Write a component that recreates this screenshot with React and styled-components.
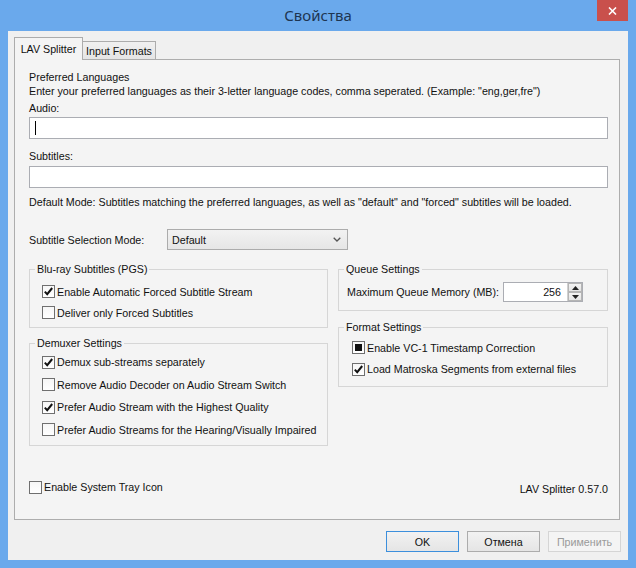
import styled, { createGlobalStyle } from "styled-components";

const FONT = `"Liberation Sans", Tahoma, Arial, sans-serif`;

const GlobalStyle = createGlobalStyle`
  html, body {
    margin: 0;
    padding: 0;
    background: #6aa9ec;
  }
  * {
    box-sizing: border-box;
  }
`;

const Window = styled.div`
  width: 636px;
  height: 568px;
  background: #6aa9ec;
  display: flex;
  flex-direction: column;
  font-family: ${FONT};
  font-size: 10.7px;
  color: #111;
`;

const TitleBar = styled.div`
  height: 31px;
  display: grid;
  grid-template-columns: 1fr auto 1fr;
  align-items: start;
`;

const Title = styled.div`
  grid-column: 2;
  padding-top: 5px;
  font-family: "Noto Sans", "Open Sans", sans-serif;
  font-size: 15px;
  line-height: 20px;
  color: #1d3551;
`;

const CloseButton = styled.div`
  grid-column: 3;
  justify-self: end;
  margin-right: 8px;
  width: 31px;
  height: 21px;
  background: #c9504c;
  display: flex;
  align-items: center;
  justify-content: center;
`;

const Client = styled.div`
  flex: 1;
  margin: 0 8px 8px;
  background: #f0f0f0;
  padding: 6px 8px 0 6px;
  display: flex;
  flex-direction: column;
`;

const TabStrip = styled.div`
  display: flex;
  align-items: flex-end;
  height: 22px;
`;

const Tab = styled.div`
  position: relative;
  height: ${(p) => (p.$active ? "23px" : "18px")};
  width: ${(p) => p.$w}px;
  margin-bottom: ${(p) => (p.$active ? "-1px" : "0")};
  margin-left: ${(p) => (p.$active ? "0" : "-1px")};
  z-index: ${(p) => (p.$active ? 1 : 0)};
  border: 1px solid #acacac;
  border-bottom: none;
  background: ${(p) =>
    p.$active ? "#f4f4f4" : "linear-gradient(#f0f0f0, #e5e5e5)"};
  display: flex;
  align-items: center;
  justify-content: center;
  line-height: 14px;
  padding-top: ${(p) => (p.$active ? "0" : "1px")};
`;

const TabPanel = styled.div`
  width: 606px;
  height: 461px;
  border: 1px solid #adadad;
  background: #f4f4f4;
  padding: 10px 11px 25px 14px;
  display: flex;
  flex-direction: column;
`;

const Line = styled.div`
  line-height: 14px;
  height: 14px;
  margin-top: ${(p) => p.$mt || 0}px;
  white-space: nowrap;
`;

const TextBox = styled.div`
  margin-top: ${(p) => p.$mt || 0}px;
  height: 22px;
  border: 1px solid #abadb3;
  background: #fff;
  display: flex;
  align-items: center;
  padding-left: 5px;
`;

const Caret = styled.span`
  width: 1px;
  height: 14px;
  background: #000;
`;

const SelectRow = styled.div`
  margin-top: 20px;
  display: flex;
  align-items: center;
  height: 21px;
`;

const SelectLabel = styled.span`
  width: 138px;
  line-height: 14px;
`;

const Select = styled.div`
  width: 181px;
  height: 21px;
  border: 1px solid #acacac;
  background: linear-gradient(#f2f2f2, #e6e6e6);
  display: flex;
  align-items: center;
  justify-content: space-between;
  padding: 0 6px 0 4px;
`;

const Groups = styled.div`
  margin-top: 12px;
  display: grid;
  grid-template-columns: 299px 270px;
  column-gap: 10px;
  align-items: start;
`;

const Column = styled.div`
  display: flex;
  flex-direction: column;
  gap: ${(p) => p.$gap}px;
`;

const GroupBox = styled.fieldset`
  margin: 0;
  min-width: 0;
  border: 1px solid #d6d6d6;
  padding: ${(p) => p.$pad};
`;

const Legend = styled.legend`
  padding: 0 2px;
  margin-left: 5px;
  line-height: 14px;
`;

const GroupBody = styled.div`
  padding: 0 ${(p) => p.$right || 0}px 0 ${(p) => p.$left}px;
`;

const CheckRow = styled.div`
  display: flex;
  align-items: center;
  gap: 2px;
  height: ${(p) => p.$h || 21}px;
  line-height: 14px;
  white-space: nowrap;
`;

const Box = styled.span`
  flex: none;
  width: 13px;
  height: 13px;
  border: 1px solid #6f6f6f;
  background: linear-gradient(#f6f6f6, #ffffff);
  display: flex;
  align-items: center;
  justify-content: center;
`;

const Dot = styled.span`
  width: 7px;
  height: 7px;
  background: #111;
`;

const Check = ({ state }) => (
  <Box>
    {state === "on" && (
      <svg width="11" height="11" viewBox="0 0 11 11">
        <path
          d="M1.8 5.6 L4.2 8.2 L9.2 2"
          fill="none"
          stroke="#111"
          strokeWidth="2"
        />
      </svg>
    )}
    {state === "mixed" && <Dot />}
  </Box>
);

const CheckItem = ({ state, h, children }) => (
  <CheckRow $h={h}>
    <Check state={state} />
    <span>{children}</span>
  </CheckRow>
);

const QueueRow = styled.div`
  display: flex;
  align-items: center;
  height: 20px;
  line-height: 14px;
  white-space: nowrap;
`;

const Spinner = styled.div`
  margin-left: auto;
  flex: none;
  width: 80px;
  height: 20px;
  border: 1px solid #abadb3;
  background: #fff;
  display: flex;
`;

const SpinValue = styled.div`
  flex: 1;
  text-align: right;
  padding-right: 6px;
  line-height: 18px;
`;

const SpinButtons = styled.div`
  width: 15px;
  display: flex;
  flex-direction: column;
  border-left: 1px solid #d0d0d0;
`;

const SpinButton = styled.div`
  flex: 1;
  background: linear-gradient(#f3f3f3, #e4e4e4);
  border: 1px solid #b5b5b5;
  display: flex;
  align-items: center;
  justify-content: center;
`;

const Footer = styled.div`
  margin-top: auto;
  display: flex;
  align-items: center;
  justify-content: space-between;
  height: 14px;
  line-height: 14px;
`;

const TrayItem = styled.div`
  display: flex;
  align-items: center;
  gap: 2px;
`;

const Version = styled.span`
  padding-top: 3px;
`;

const ButtonRow = styled.div`
  margin-top: 11px;
  margin-right: -1px;
  display: flex;
  justify-content: flex-end;
  gap: 8px;
`;

const Button = styled.div`
  width: 73px;
  height: 21px;
  border: 1px solid
    ${(p) => (p.$default ? "#3c8fdc" : p.$disabled ? "#d5d5d5" : "#acacac")};
  background: ${(p) =>
    p.$disabled ? "#f4f4f4" : "linear-gradient(#f2f2f2, #e5e5e5)"};
  color: ${(p) => (p.$disabled ? "#9a9a9a" : "#111")};
  display: flex;
  align-items: center;
  justify-content: center;
  line-height: 14px;
`;

const Triangle = ({ up }) => (
  <svg width="7" height="4" viewBox="0 0 7 4">
    <path d={up ? "M0 4 L3.5 0 L7 4 Z" : "M0 0 L7 0 L3.5 4 Z"} fill="#222" />
  </svg>
);

export default function App() {
  return (
    <>
      <GlobalStyle />
      <Window>
        <TitleBar>
          <Title>Свойства</Title>
          <CloseButton>
            <svg width="9" height="8" viewBox="0 0 9 8">
              <path
                d="M1 0.5 L8 7.5 M8 0.5 L1 7.5"
                stroke="#fff"
                strokeWidth="1.6"
              />
            </svg>
          </CloseButton>
        </TitleBar>

        <Client>
          <TabStrip>
            <Tab $active $w={69}>
              LAV Splitter
            </Tab>
            <Tab $w={74}>Input Formats</Tab>
          </TabStrip>

          <TabPanel>
            <Line>Preferred Languages</Line>
            <Line>
              Enter your preferred languages as their 3-letter language codes,
              comma seperated. (Example: "eng,ger,fre")
            </Line>
            <Line $mt={3}>Audio:</Line>
            <TextBox $mt={2}>
              <Caret />
            </TextBox>
            <Line $mt={10}>Subtitles:</Line>
            <TextBox $mt={3} />
            <Line $mt={7}>
              Default Mode: Subtitles matching the preferred languages, as well
              as "default" and "forced" subtitles will be loaded.
            </Line>

            <SelectRow>
              <SelectLabel>Subtitle Selection Mode:</SelectLabel>
              <Select>
                <span>Default</span>
                <svg width="8" height="5" viewBox="0 0 8 5">
                  <path
                    d="M0.7 0.7 L4 4 L7.3 0.7"
                    fill="none"
                    stroke="#555"
                    strokeWidth="1.3"
                  />
                </svg>
              </Select>
            </SelectRow>

            <Groups>
              <Column $gap={8}>
                <GroupBox $pad="5px 0 4px">
                  <Legend>Blu-ray Subtitles (PGS)</Legend>
                  <GroupBody $left={12}>
                    <CheckItem state="on">
                      Enable Automatic Forced Subtitle Stream
                    </CheckItem>
                    <CheckItem>Deliver only Forced Subtitles</CheckItem>
                  </GroupBody>
                </GroupBox>

                <GroupBox $pad="1px 0 4px">
                  <Legend>Demuxer Settings</Legend>
                  <GroupBody $left={12}>
                    <CheckItem state="on" h={22.5}>
                      Demux sub-streams separately
                    </CheckItem>
                    <CheckItem h={22.5}>
                      Remove Audio Decoder on Audio Stream Switch
                    </CheckItem>
                    <CheckItem state="on" h={22.5}>
                      Prefer Audio Stream with the Highest Quality
                    </CheckItem>
                    <CheckItem h={22.5}>
                      Prefer Audio Streams for the Hearing/Visually Impaired
                    </CheckItem>
                  </GroupBody>
                </GroupBox>
              </Column>

              <Column $gap={9}>
                <GroupBox $pad="6px 0 8px">
                  <Legend>Queue Settings</Legend>
                  <GroupBody $left={8} $right={24}>
                    <QueueRow>
                      <span>Maximum Queue Memory (MB):</span>
                      <Spinner>
                        <SpinValue>256</SpinValue>
                        <SpinButtons>
                          <SpinButton>
                            <Triangle up />
                          </SpinButton>
                          <SpinButton>
                            <Triangle />
                          </SpinButton>
                        </SpinButtons>
                      </Spinner>
                    </QueueRow>
                  </GroupBody>
                </GroupBox>

                <GroupBox $pad="3px 0 6px">
                  <Legend>Format Settings</Legend>
                  <GroupBody $left={13}>
                    <CheckItem state="mixed" h={21.5}>
                      Enable VC-1 Timestamp Correction
                    </CheckItem>
                    <CheckItem state="on" h={21.5}>
                      Load Matroska Segments from external files
                    </CheckItem>
                  </GroupBody>
                </GroupBox>
              </Column>
            </Groups>

            <Footer>
              <TrayItem>
                <Check />
                <span>Enable System Tray Icon</span>
              </TrayItem>
              <Version>LAV Splitter 0.57.0</Version>
            </Footer>
          </TabPanel>

          <ButtonRow>
            <Button $default>OK</Button>
            <Button>Отмена</Button>
            <Button $disabled>Применить</Button>
          </ButtonRow>
        </Client>
      </Window>
    </>
  );
}
